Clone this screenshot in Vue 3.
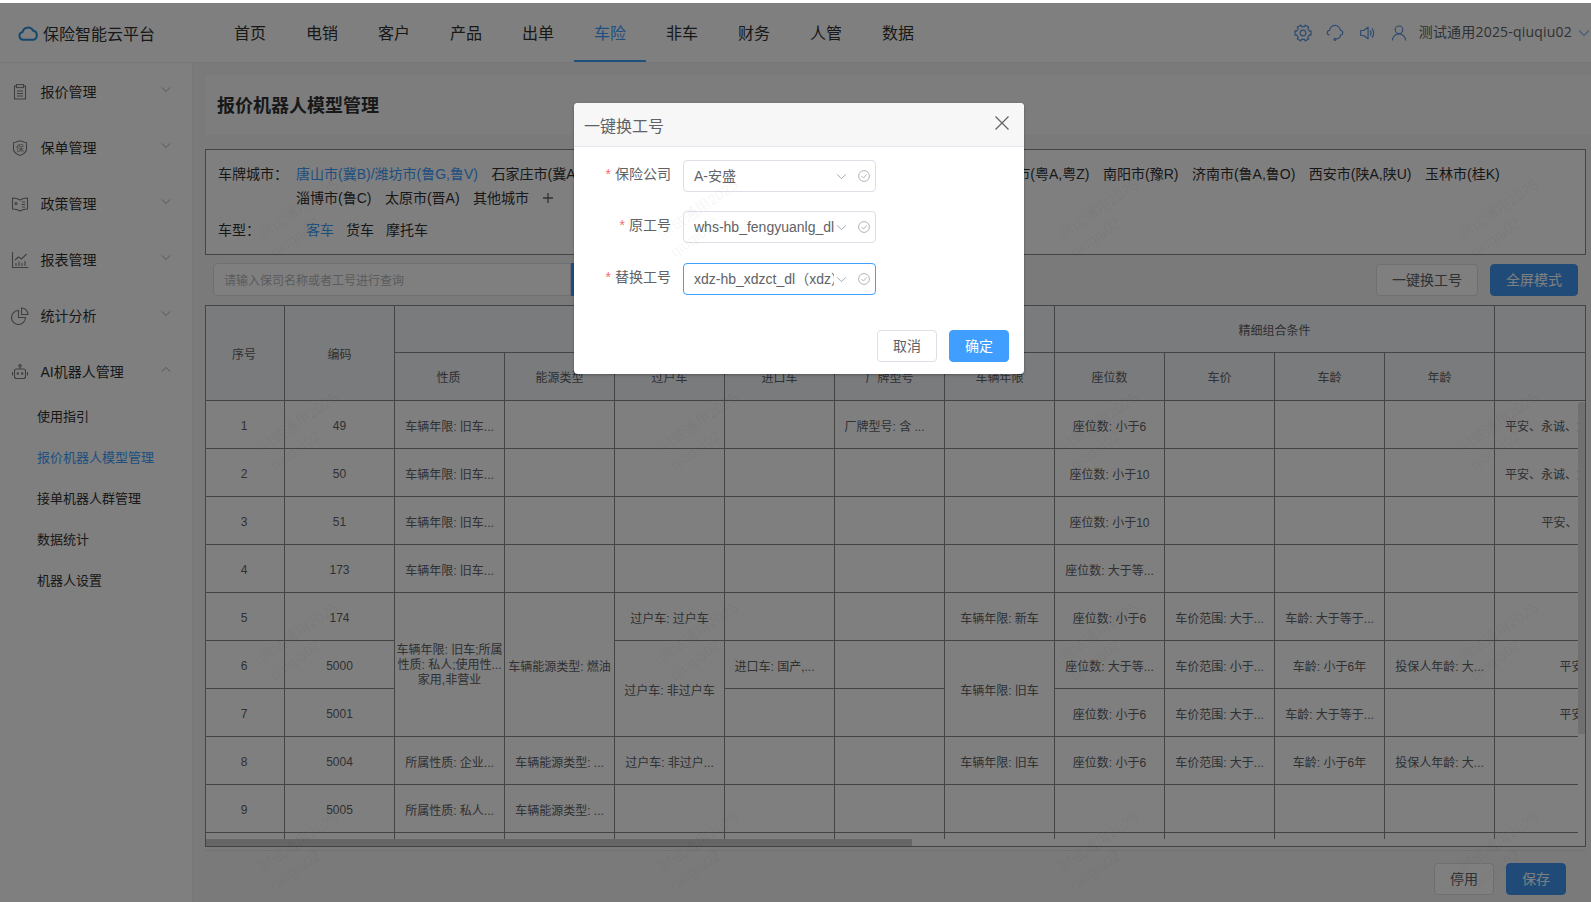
<script setup>
const navItems = ["首页", "电销", "客户", "产品", "出单", "车险", "非车", "财务", "人管", "数据"];
const sideItems = ["报价管理", "保单管理", "政策管理", "报表管理", "统计分析"];
const subItems = ["使用指引", "报价机器人模型管理", "接单机器人群管理", "数据统计", "机器人设置"];
const cities = [
  "石家庄市(冀A)", "乌鲁木齐市(新A)", "哈尔滨市(黑A)", "郑州市(豫A)", "武汉市(鄂A)", "广州市(粤A,粤Z)",
  "南阳市(豫R)", "济南市(鲁A,鲁O)", "西安市(陕A,陕U)", "玉林市(桂K)", "淄博市(鲁C)", "太原市(晋A)", "其他城市"
];

const colWidths = [79, 110, 110, 110, 110, 110, 110, 110, 110, 110, 110, 110, 190];
const tableWidth = colWidths.reduce((a, b) => a + b, 0);

const c = (t, span = 1, wrap = false) => ({ t, span, wrap });
const fill = (list) => list.map((x) => (typeof x === "string" ? c(x) : x));

const rows = [
  ["1", "49", "车辆年限: 旧车...", "", "", "", "厂牌型号: 含 ...\u00a0\u00a0\u00a0", "", "座位数: 小于6", "", "", "", "平安、永诚、太平、人保、大地、阳光"],
  ["2", "50", "车辆年限: 旧车...", "", "", "", "", "", "座位数: 小于10", "", "", "", "平安、永诚、太平、人保、大地、阳光"],
  ["3", "51", "车辆年限: 旧车...", "", "", "", "", "", "座位数: 小于10", "", "", "", "平安、永诚、太平"],
  ["4", "173", "车辆年限: 旧车...", "", "", "", "", "", "座位数: 大于等...", "", "", "", ""],
  ["5", "174", c("车辆年限: 旧车;所属\n性质: 私人;使用性...\n家用,非营业", 3, true), c("车辆能源类型: 燃油", 3), "过户车: 过户车", "", "", "车辆年限: 新车", "座位数: 小于6", "车价范围: 大于...", "车龄: 大于等于...", "", ""],
  ["6", "5000", c("过户车:  非过户车", 2), "进口车: 国产,...\u00a0\u00a0\u00a0", "", c("车辆年限: 旧车", 2), "座位数: 大于等...", "车价范围: 小于...", "车龄: 小于6年", "投保人年龄: 大...", "平安、永诚"],
  ["7", "5001", "", "", "座位数: 小于6", "车价范围: 大于...", "车龄: 大于等于...", "", "平安、永诚"],
  ["8", "5004", "所属性质: 企业...", "车辆能源类型: ...", "过户车: 非过户...", "", "", "车辆年限: 旧车", "座位数: 小于6", "车价范围: 大于...", "车龄: 小于6年", "投保人年龄: 大...", ""],
  ["9", "5005", "所属性质: 私人...", "车辆能源类型: ...", "", "", "", "", "", "", "", "", ""],
  ["10", "5006", "", "", "", "", "", "", "", "", "", "", ""]
].map(fill);

const formRows = [
  { label: "保险公司", value: "A-安盛" },
  { label: "原工号", value: "whs-hb_fengyuanlg_dl" },
  { label: "替换工号", value: "xdz-hb_xdzct_dl（xdz）", focus: true }
];

const marks = [];
for (const y of [218, 431, 641, 851]) {
  for (const x of [305, 705, 1105, 1505]) {
    marks.push({ left: x - 48 + "px", top: y - 22 + "px" });
  }
}

// six lobed outline for the settings icon
const gearPath = (() => {
  let d = "";
  for (let i = 0; i < 12; i++) {
    const a = ((i * 30 - 15) * Math.PI) / 180;
    const b = ((i * 30 + 15) * Math.PI) / 180;
    const r = i % 2 ? 7.4 : 9.2;
    const p = (t) => `${(10 + r * Math.cos(t)).toFixed(1)} ${(10 + r * Math.sin(t)).toFixed(1)}`;
    d += (i ? "L" : "M") + p(a) + "L" + p(b);
  }
  return d + "Z";
})();
</script>

<template>
  <div class="page">
    <header class="topbar">
      <div class="brand">
        <svg class="cloud" viewBox="0 0 20 16" width="20" height="16">
          <path d="M5.2 14.8a4 4 0 0 1-.6-7.9A5.6 5.6 0 0 1 15 5.6a4.7 4.7 0 0 1 .1 9.2Z" />
        </svg>
        <span>保险智能云平台</span>
      </div>
      <nav class="nav">
        <a v-for="item in navItems" :key="item" class="nav-item" :class="{ active: item === '车险' }">{{ item }}</a>
      </nav>
      <div class="top-right">
        <svg class="top-icon" viewBox="0 0 20 20"><path :d="gearPath" stroke-linejoin="round" /><circle cx="10" cy="10" r="3.2" /></svg>
        <svg class="top-icon" viewBox="0 0 20 20">
          <path d="M3.8 7.8a6.200 6.200 0 0 1 12.400 0" />
          <path d="M3.800 7.200a2.400 2.400 0 0 0 0 4.800M16.200 7.200a2.400 2.400 0 0 1 0 4.800" />
          <path d="M16.200 12c0 2.800-2 4.400-5 4.800" />
          <circle cx="10" cy="17" r="1.100" />
        </svg>
        <svg class="top-icon" viewBox="0 0 20 20">
          <path d="M3 7.200h3.200l5-3.600v12.800l-5-3.600H3Z" stroke-linejoin="round" />
          <path d="M13.400 7.400a3.800 3.800 0 0 1 0 5.200M15.400 5a7 7 0 0 1 0 10" />
        </svg>
        <svg class="top-icon" viewBox="0 0 20 20">
          <circle cx="10" cy="6.400" r="4.200" />
          <path d="M2.600 18.400a7.400 7.400 0 0 1 14.800 0" />
        </svg>
        <span class="user-name">测试通用2025-qiuqiu02</span>
        <svg class="chev user-chev" viewBox="0 0 12 8"><path d="M1 1.500l5 5 5-5" /></svg>
      </div>
    </header>

    <div class="body-row">
      <aside class="sidebar">
        <div v-for="(item, i) in sideItems" :key="item" class="side-item">
          <svg class="side-icon" viewBox="0 0 18 18">
            <template v-if="i === 0">
              <path d="M5.500 3H3.500v13h11V3h-2" />
              <rect x="5.500" y="1.600" width="7" height="3" />
              <path d="M6 8h6M6 10.500h6M6 13h6" />
            </template>
            <template v-else-if="i === 1">
              <path d="M9 1.800l6.500 2v6.400c0 3-3.400 5-6.500 6.200-3.100-1.200-6.500-3.200-6.500-6.200V3.800Z" />
              <text x="9" y="12" class="shield-char">保</text>
            </template>
            <template v-else-if="i === 2">
              <path d="M1.500 3c3 0 5.500.6 7.500 2 2-1.400 4.500-2 7.500-2v11c-3 0-5.500.6-7.500 2-2-1.400-4.500-2-7.500-2Z" />
              <circle cx="5" cy="8.500" r="1" />
              <path d="M11 7h3M10.500 9.500h3.500M11 12h3" />
            </template>
            <template v-else-if="i === 3">
              <path d="M1.500 1v15.500h16" />
              <path d="M4 9l3.500-3 3 2 5-5" />
              <path d="M5 15v-3M8 15v-4.500M11 15v-3M14 15v-5" />
            </template>
            <template v-else>
              <path d="M7.500 3.500a7 7 0 1 0 7 7h-7Z" />
              <path d="M10.500 1a6.500 6.500 0 0 1 6.500 6.500h-6.500Z" />
            </template>
          </svg>
          <span>{{ item }}</span>
          <svg class="chev side-chev" viewBox="0 0 12 8"><path d="M1 1.500l5 5 5-5" /></svg>
        </div>
        <div class="side-item">
          <svg class="side-icon" viewBox="0 0 18 18">
            <rect x="3.500" y="6" width="11" height="9.500" rx="2" />
            <circle cx="9" cy="2.800" r="1.200" />
            <path d="M9 4v2M1.500 9v3.500M16.500 9v3.500" />
            <circle cx="6.800" cy="10.500" r=".7" />
            <circle cx="11.200" cy="10.500" r=".7" />
          </svg>
          <span>AI机器人管理</span>
          <svg class="chev side-chev" viewBox="0 0 12 8"><path d="M1 6.500l5-5 5 5" /></svg>
        </div>
        <div class="sub-list">
          <a v-for="item in subItems" :key="item" class="sub-item" :class="{ active: item === '报价机器人模型管理' }">{{ item }}</a>
        </div>
      </aside>

      <main class="main">
        <div class="title-panel">报价机器人模型管理</div>

        <section class="filter-box">
          <div class="filter-row">
            <span class="filter-label">车牌城市：</span>
            <div class="city-list">
              <span class="link-active">唐山市(冀B)/潍坊市(鲁G,鲁V)</span>
              <span v-for="city in cities" :key="city">{{ city }}</span>
              <svg class="plus" viewBox="0 0 10 10" width="10" height="10"><path d="M5 0v10M0 5h10" /></svg>
            </div>
          </div>
          <div class="filter-row type-row">
            <span class="filter-label">车型：</span>
            <div class="type-list">
              <span class="link-active">客车</span>
              <span>货车</span>
              <span>摩托车</span>
            </div>
          </div>
        </section>

        <div class="toolbar">
          <div class="search">
            <div class="search-input">请输入保司名称或者工号进行查询</div>
            <button class="search-btn">查询</button>
          </div>
          <div class="tool-btns">
            <button class="btn tool-plain">一键换工号</button>
            <button class="btn btn-primary tool-full">全屏模式</button>
          </div>
        </div>

        <div class="table-wrap">
          <div class="head-clip">
            <table class="grid" :style="{ width: tableWidth + 'px' }">
              <colgroup><col v-for="(w, i) in colWidths" :key="i" :style="{ width: w + 'px' }" /></colgroup>
              <thead>
                <tr class="head-top">
                  <th rowspan="2">序号</th>
                  <th rowspan="2">编码</th>
                  <th colspan="6">基础组合条件</th>
                  <th colspan="4">精细组合条件</th>
                  <th></th>
                </tr>
                <tr class="head-sub">
                  <th>性质</th>
                  <th>能源类型</th>
                  <th>过户车</th>
                  <th>进口车</th>
                  <th>厂牌型号</th>
                  <th>车辆年限</th>
                  <th>座位数</th>
                  <th>车价</th>
                  <th>车龄</th>
                  <th>年龄</th>
                  <th></th>
                </tr>
              </thead>
            </table>
          </div>
          <div class="body-clip">
            <table class="grid" :style="{ width: tableWidth + 'px' }">
              <colgroup><col v-for="(w, i) in colWidths" :key="i" :style="{ width: w + 'px' }" /></colgroup>
              <tbody>
                <tr v-for="(row, r) in rows" :key="r">
                  <td
                    v-for="(cell, i) in row"
                    :key="i"
                    :rowspan="cell.span"
                    :class="{ wrap: cell.wrap, last: i === row.length - 1 }"
                  >{{ cell.t }}</td>
                </tr>
              </tbody>
            </table>
          </div>
          <div class="bar-x"></div>
          <div class="bar-y"></div>
        </div>

        <footer class="foot">
          <button class="btn">停用</button>
          <button class="btn btn-primary">保存</button>
        </footer>
      </main>
    </div>

    <div class="mask"></div>

    <div class="dialog">
      <div class="dialog-head">
        <span>一键换工号</span>
        <svg class="dialog-close" viewBox="0 0 14 14" width="14" height="14"><path d="M.5.5l13 13M13.500.5l-13 13" /></svg>
      </div>
      <div class="dialog-body">
        <div v-for="row in formRows" :key="row.label" class="form-row">
          <label class="form-label"><i>*</i>{{ row.label }}</label>
          <div class="select" :class="{ focus: row.focus }">
            <span class="select-value">{{ row.value }}</span>
            <svg class="chev select-chev" viewBox="0 0 12 8"><path d="M1 1.500l5 5 5-5" /></svg>
            <svg class="select-ok" viewBox="0 0 12 12" width="12" height="12">
              <circle cx="6" cy="6" r="5.400" />
              <path d="M3.500 6l2 2 3.200-3.600" />
            </svg>
          </div>
        </div>
      </div>
      <div class="dialog-foot">
        <button class="btn">取消</button>
        <button class="btn btn-blue">确定</button>
      </div>
    </div>

    <div class="marks">
      <div v-for="(m, i) in marks" :key="i" class="mark" :style="m">测试通用2025<br />qiuqiu02</div>
    </div>
  </div>
</template>

<style scoped>
* {
  box-sizing: border-box;
}

.page {
  position: relative;
  width: 1591px;
  height: 902px;
  padding-top: 3px;
  overflow: hidden;
  background: #fff;
  color: #303133;
  font-family: "Liberation Sans", "Noto Sans CJK SC", sans-serif;
  font-size: 14px;
}

.topbar {
  display: flex;
  align-items: stretch;
  height: 60px;
  background: #fff;
  border-bottom: 1px solid #eee;
}

.brand {
  display: flex;
  align-items: center;
  gap: 5px;
  width: 214px;
  padding-left: 18px;
  font-size: 16px;
}

.cloud path {
  fill: none;
  stroke: #2d8fd8;
  stroke-width: 2;
}

.nav {
  display: flex;
}

.nav-item {
  display: flex;
  align-items: center;
  width: 72px;
  padding: 0 20px;
  font-size: 16px;
  border-bottom: 2px solid transparent;
}

.nav-item.active {
  color: #409eff;
  border-bottom-color: #409eff;
}

.top-right {
  display: flex;
  align-items: center;
  margin-left: auto;
  padding-right: 1px;
}

.top-icon {
  width: 18px;
  height: 18px;
  margin-left: 14px;
  fill: none;
  stroke: #5b94e0;
  stroke-width: 1.3;
}

.user-name {
  margin-left: 11px;
  color: #606266;
  font-family: "Open Sans", "Noto Sans CJK SC", sans-serif;
  line-height: 20px;
  letter-spacing: 0.2px;
  position: relative;
  top: -1px;
}

.chev {
  fill: none;
  stroke: #a0a4ab;
  stroke-width: 1.1;
}

.user-chev {
  width: 12px;
  height: 8px;
  margin-left: 6px;
  stroke: #8fb6e6;
}

.body-row {
  display: flex;
  height: 839px;
}

.sidebar {
  flex: none;
  width: 193px;
  padding-top: 1px;
  background: #fff;
  border-right: 1px solid #f0f0f0;
}

.side-item {
  display: flex;
  align-items: center;
  height: 56px;
  padding-left: 11px;
  line-height: 20px;
}

.side-icon {
  flex: none;
  width: 18px;
  height: 18px;
  margin-right: 11.5px;
  fill: none;
  stroke: #7d7f84;
  stroke-width: 1.1;
}

.shield-char {
  fill: #7d7f84;
  stroke: none;
  font-size: 8px;
  text-anchor: middle;
}

.side-chev {
  width: 10px;
  height: 7px;
  margin-left: auto;
  margin-right: 21px;
  position: relative;
  top: -3px;
}

.sub-list {
  display: flex;
  flex-direction: column;
  margin-top: -4px;
}

.sub-item {
  height: 41px;
  padding-left: 37px;
  font-size: 13px;
  line-height: 41px;
}

.sub-item.active {
  color: #409eff;
}

.main {
  flex: none;
  width: 1398px;
  padding: 12px 5px 0 12px;
  background: #f5f5f5;
}

.title-panel {
  height: 60px;
  margin-right: -5px;
  padding-left: 12px;
  background: #fbfbfb;
  color: #303133;
  font-size: 18px;
  font-weight: 700;
  line-height: 63px;
}

.filter-box {
  height: 106px;
  margin-top: 14px;
  padding: 12px 12px 0;
  background: #fff;
  border: 1px solid #888;
  line-height: 24px;
}

.filter-row {
  display: flex;
}

.filter-label {
  flex: none;
  width: 78px;
}

.city-list {
  display: flex;
  flex-wrap: wrap;
  align-items: center;
  column-gap: 13.5px;
}

.link-active {
  color: #409eff;
}

.plus {
  stroke: #606266;
  stroke-width: 1.3;
}

.type-row {
  margin-top: 8px;
}

.type-list {
  display: flex;
  gap: 12px;
  margin-left: 10px;
}

.toolbar {
  display: flex;
  align-items: center;
  justify-content: space-between;
  height: 33px;
  margin-top: 8px;
  padding: 0 8px;
}

.search {
  display: flex;
}

.search-input {
  width: 358px;
  height: 33px;
  padding-left: 10px;
  background: #fff;
  border: 1px solid #dcdfe6;
  border-radius: 4px 0 0 4px;
  color: #b4b6ba;
  font-size: 12px;
  line-height: 34px;
}

.search-btn {
  width: 60px;
  height: 33px;
  background: #409eff;
  border: 0;
  color: #fff;
  font: inherit;
}

.tool-btns {
  display: flex;
  gap: 12px;
}

.btn {
  width: 60px;
  height: 32px;
  padding: 0 0 2px;
  background: #fff;
  border: 1px solid #dcdfe6;
  border-radius: 4px;
  color: #606266;
  font: inherit;
  font-size: 14px;
}

.btn-primary {
  background: #4096f0;
  border-color: #4096f0;
  color: #fff;
}

.btn-blue {
  background: #409eff;
  border-color: #409eff;
  color: #fff;
}

.tool-plain {
  width: 102px;
}

.tool-full {
  width: 88px;
}

.table-wrap {
  position: relative;
  height: 542px;
  margin-top: 9px;
  background: #fff;
  border: 1px solid #888;
}

.head-clip {
  height: 95px;
  overflow: hidden;
}

.body-clip {
  height: 438px;
  margin-right: 7px;
  overflow: hidden;
}

.grid {
  table-layout: fixed;
  border-collapse: separate;
  border-spacing: 0;
  color: #606266;
  font-size: 12px;
}

.grid th,
.grid td {
  height: 48px;
  padding: 0;
  border-right: 1px solid #888;
  border-bottom: 1px solid #888;
  text-align: center;
  font-weight: 400;
  overflow: hidden;
  white-space: nowrap;
  text-overflow: ellipsis;
}

.grid td {
  padding-top: 2px;
}

.grid th:first-child,
.grid td:first-child {
  padding-right: 2px;
}

.grid th {
  background: #f3f6fa;
}

.head-top th {
  height: 47px;
}

.grid td.wrap {
  white-space: pre-line;
  line-height: 15.3px;
}

.grid td.last {
  padding: 2px 10px 0;
}

.bar-x {
  position: absolute;
  left: 0;
  bottom: 0;
  width: 706px;
  height: 7px;
  background: #ccc;
}

.bar-y {
  position: absolute;
  right: 0;
  top: 96px;
  width: 7px;
  height: 332px;
  background: #e0e0e0;
  border-radius: 3px 3px 0 0;
}

.foot {
  display: flex;
  justify-content: flex-end;
  gap: 12px;
  margin-top: 3px;
  padding: 12px 20px 0 0;
  border-top: 1px solid #e4e4e4;
}

.mask {
  position: absolute;
  inset: 3px 0 0 0;
  background: rgba(0, 0, 0, 0.5);
}

.dialog {
  position: absolute;
  left: 574px;
  top: 103px;
  width: 450px;
  background: #fff;
  border-radius: 4px;
  box-shadow: 0 1px 3px rgba(0, 0, 0, 0.3);
}

.dialog-head {
  display: flex;
  align-items: center;
  justify-content: space-between;
  height: 44px;
  padding: 0 15px 0 10px;
  background: #f7f7f7;
  border-bottom: 1px solid #e4e7ed;
  border-radius: 4px 4px 0 0;
  color: #606266;
  font-size: 16px;
}

.dialog-close {
  fill: none;
  stroke: #606266;
  stroke-width: 1.2;
  margin-top: -3px;
}

.dialog-body {
  display: flex;
  flex-direction: column;
  gap: 19px;
  padding-top: 13px;
}

.form-row {
  display: flex;
}

.form-row:last-child {
  margin-top: 1px;
}

.form-label {
  width: 97px;
  margin-right: 12px;
  color: #606266;
  line-height: 28px;
  text-align: right;
}

.form-label i {
  margin-right: 4px;
  color: #f56c6c;
  font-style: normal;
}

.select {
  position: relative;
  display: flex;
  align-items: center;
  width: 192.5px;
  height: 32px;
  padding-left: 10px;
  border: 1px solid #dcdfe6;
  border-radius: 4px;
  color: #606266;
}

.select.focus {
  border-color: #409eff;
}

.select-value {
  flex: none;
  width: 140px;
  overflow: hidden;
  white-space: nowrap;
  line-height: 30px;
}

.select-chev {
  width: 11px;
  height: 7px;
  margin-left: 2px;
}

.select-ok {
  margin-left: 11px;
  fill: none;
  stroke: #a8abb2;
  stroke-width: 0.9;
}

.dialog-foot {
  display: flex;
  justify-content: flex-end;
  gap: 12px;
  margin-top: 35px;
  padding: 0 15px 12px 0;
}

.marks {
  position: absolute;
  inset: 0;
  pointer-events: none;
}

.mark {
  position: absolute;
  width: 96px;
  color: rgba(0, 0, 0, 0.05);
  font-size: 15px;
  line-height: 21px;
  white-space: nowrap;
  transform: rotate(-35deg);
}
</style>

<style>
body {
  margin: 0;
  overflow: hidden;
}
</style>
